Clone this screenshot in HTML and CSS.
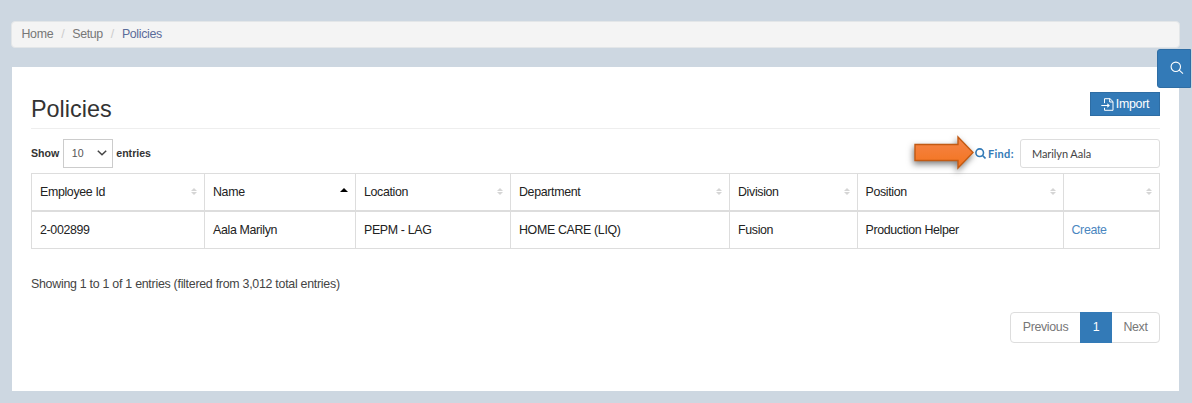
FILE: index.html
```html
<!DOCTYPE html>
<html lang="en">
<head>
<meta charset="utf-8">
<title>Policies</title>
<link rel="stylesheet" href="styles.css">
</head>
<body>
<nav class="breadcrumb"><a class="crumb">Home</a><span class="sep">/</span><a class="crumb">Setup</a><span class="sep">/</span><span class="crumb current">Policies</span></nav>
<button class="search-tab" aria-label="Search"><svg width="14" height="14" viewBox="0 0 14 14" fill="none" stroke="#fff" stroke-width="1.1"><circle cx="5.8" cy="5.8" r="4.7"/><path d="M9.2 9.2L13 12.6"/></svg></button>
<main class="panel">
  <header class="head">
    <h1>Policies</h1>
    <button class="import"><svg width="13" height="13" viewBox="0 0 13 13" fill="none" stroke="#fff" stroke-width="1"><path d="M3.5 5.200V.7H9L12 3.600V12.300H3.500V9.800M8.700 .7V4H12M.3 7.500H8"/><path d="M6.300 5.300L8.900 7.500L6.300 9.700Z" fill="#fff" stroke="none"/></svg><span>Import</span></button>
  </header>
  <div class="tools">
    <div class="length"><b>Show</b><span class="select"><span>10</span><svg width="10" height="6" viewBox="0 0 10 6" fill="none" stroke="#444" stroke-width="1.5"><path d="M.8 .8L5 4.800L9.200 .8"/></svg></span><b>entries</b></div>
    <div class="find">
      <svg class="arrow" width="70" height="46" viewBox="0 0 70 46"><defs><linearGradient id="orange" x1="0" y1="0" x2="0" y2="1"><stop offset="0" stop-color="#f5854a"/><stop offset="1" stop-color="#f3731c"/></linearGradient></defs><path d="M6 14.500H49V7L64 22.500L49 38V30.500H6Z" fill="url(#orange)" stroke="#c25a13" stroke-width="1.400"/></svg>
      <svg width="11" height="11" viewBox="0 0 11 11" fill="none" stroke="#337ab7" stroke-width="1.600"><circle cx="4.700" cy="4.700" r="3.800"/><path d="M7.300 7.300L10.500 10.500"/></svg>
      <b class="find-label">Find:</b><span class="input">Marilyn Aala</span>
    </div>
  </div>
  <table>
    <colgroup><col class="c1"><col class="c2"><col class="c3"><col class="c4"><col class="c5"><col class="c6"><col class="c7"></colgroup>
    <thead><tr>
      <th><div>Employee Id<i class="sort"></i></div></th>
      <th><div>Name<i class="sort asc"></i></div></th>
      <th><div>Location<i class="sort"></i></div></th>
      <th><div>Department<i class="sort"></i></div></th>
      <th><div>Division<i class="sort"></i></div></th>
      <th><div>Position<i class="sort"></i></div></th>
      <th><div><span></span><i class="sort"></i></div></th>
    </tr></thead>
    <tbody><tr><td>2-002899</td><td>Aala Marilyn</td><td>PEPM - LAG</td><td>HOME CARE (LIQ)</td><td>Fusion</td><td>Production Helper</td><td><a class="create">Create</a></td></tr></tbody>
  </table>
  <p class="info">Showing 1 to 1 of 1 entries (filtered from 3,012 total entries)</p>
  <div class="pager"><span class="prev">Previous</span><span class="page">1</span><span class="next">Next</span></div>
</main>
</body>
</html>
```
FILE: styles.css
```css
* { box-sizing: border-box; }
body { margin: 0; padding: 21px 12px 12px 11px; height: 403px; background: #cdd7e1; color: #222; font: 12.4px/18px "Liberation Sans", Arial, sans-serif; letter-spacing: -.34px; overflow: hidden; }
button { font: inherit; letter-spacing: inherit; padding: 0; border: 0; }
svg { display: block; flex: none; }
.breadcrumb { height: 27px; width: 1169px; padding: 0 9.500px 2px; display: flex; align-items: center; background: #f4f4f4; border: 1px solid #e3e6e8; border-radius: 4px; color: #777; }
.sep { width: 19px; text-align: center; color: #ccc; }
.crumb.current { color: #5b6c9a; }
.search-tab { position: absolute; left: 1157px; top: 49px; width: 34px; height: 39px; padding: 0 0 2px 6px; display: flex; align-items: center; justify-content: center; background: #337ab7; border: 1px solid #2e6da4; border-radius: 3px 0 0 3px; }
.panel { width: 1167px; height: 324px; margin: 19px 0 0 1px; padding: 25px 19px 0; background: #fff; }
.head { height: 37px; display: flex; justify-content: space-between; border-bottom: 1px solid #eee; }
h1 { margin: 3px 0 0; font-size: 23.4px; line-height: 28px; font-weight: 400; letter-spacing: 0; color: #333; }
.import { width: 70px; height: 24px; display: flex; align-items: center; justify-content: center; gap: 2px; color: #fff; background: #337ab7; border: 1px solid #2e6da4; letter-spacing: -.25px; }
.tools { height: 38px; margin-top: 10px; display: flex; justify-content: space-between; align-items: center; padding-bottom: 10px; }
.length { display: flex; align-items: center; font-size: 10.6px; letter-spacing: 0; gap: 3.500px; color: #333; }
.select { width: 50px; height: 29px; border: 1px solid #ccc; display: flex; justify-content: space-between; align-items: center; padding: 0 5px 0 8px; color: #555; }
.find { position: relative; display: flex; align-items: center; color: #337ab7; font: 11px/16px Lato, sans-serif; letter-spacing: 0; }
.find-label { width: 32px; margin-left: 2px; padding-top: 1px; letter-spacing: .3px; }
.input { width: 140px; height: 29px; border: 1px solid #ddd; border-radius: 3px; padding: 6px 11px; color: #444; letter-spacing: -.08px; }
.arrow { position: absolute; left: -66px; top: -9px; filter: drop-shadow(-1px 3px 3px rgba(0,0,0,.5)); }
table { width: 1128px; table-layout: fixed; border-collapse: collapse; margin-top: -4px; }
.c1 { width: 173px; } .c2 { width: 151px; } .c3 { width: 155px; } .c4 { width: 219px; } .c5 { width: 128px; } .c6 { width: 206px; } .c7 { width: 96px; }
th, td { border: 1px solid #ddd; padding: 0 8px; text-align: left; font-weight: 400; height: 38px; }
th { border-bottom: 2px solid #ddd; height: 37px; }
td:nth-child(n+6), th:nth-child(n+6) { padding-left: 7.500px; }
th > div { display: flex; align-items: center; justify-content: space-between; }
.sort { width: 6px; height: 7px; margin-right: -1px; display: flex; flex-direction: column; justify-content: space-between; }
.sort::before, .sort::after { content: ""; border: 3px solid transparent; }
.sort::before { border-top: 0; border-bottom-color: #d5d5d5; }
.sort::after { border-bottom: 0; border-top-color: #d5d5d5; }
.sort.asc { width: 8px; }
.sort.asc::before { border: 4px solid transparent; border-top: 0; border-bottom-color: #000; }
.sort.asc::after { display: none; }
.create { color: #4a86bf; }
.info { margin: 26px 0 0; color: #444; letter-spacing: -.27px; }
.pager { display: flex; width: 150px; height: 31px; margin: 19px 0 0 979px; border: 1px solid #ddd; border-radius: 4px; color: #777; line-height: 28px; text-align: center; }
.prev { width: 69px; }
.page { width: 32px; height: 31px; margin-top: -1px; background: #337ab7; color: #fff; line-height: 30px; }
.next { flex: 1; }
```
